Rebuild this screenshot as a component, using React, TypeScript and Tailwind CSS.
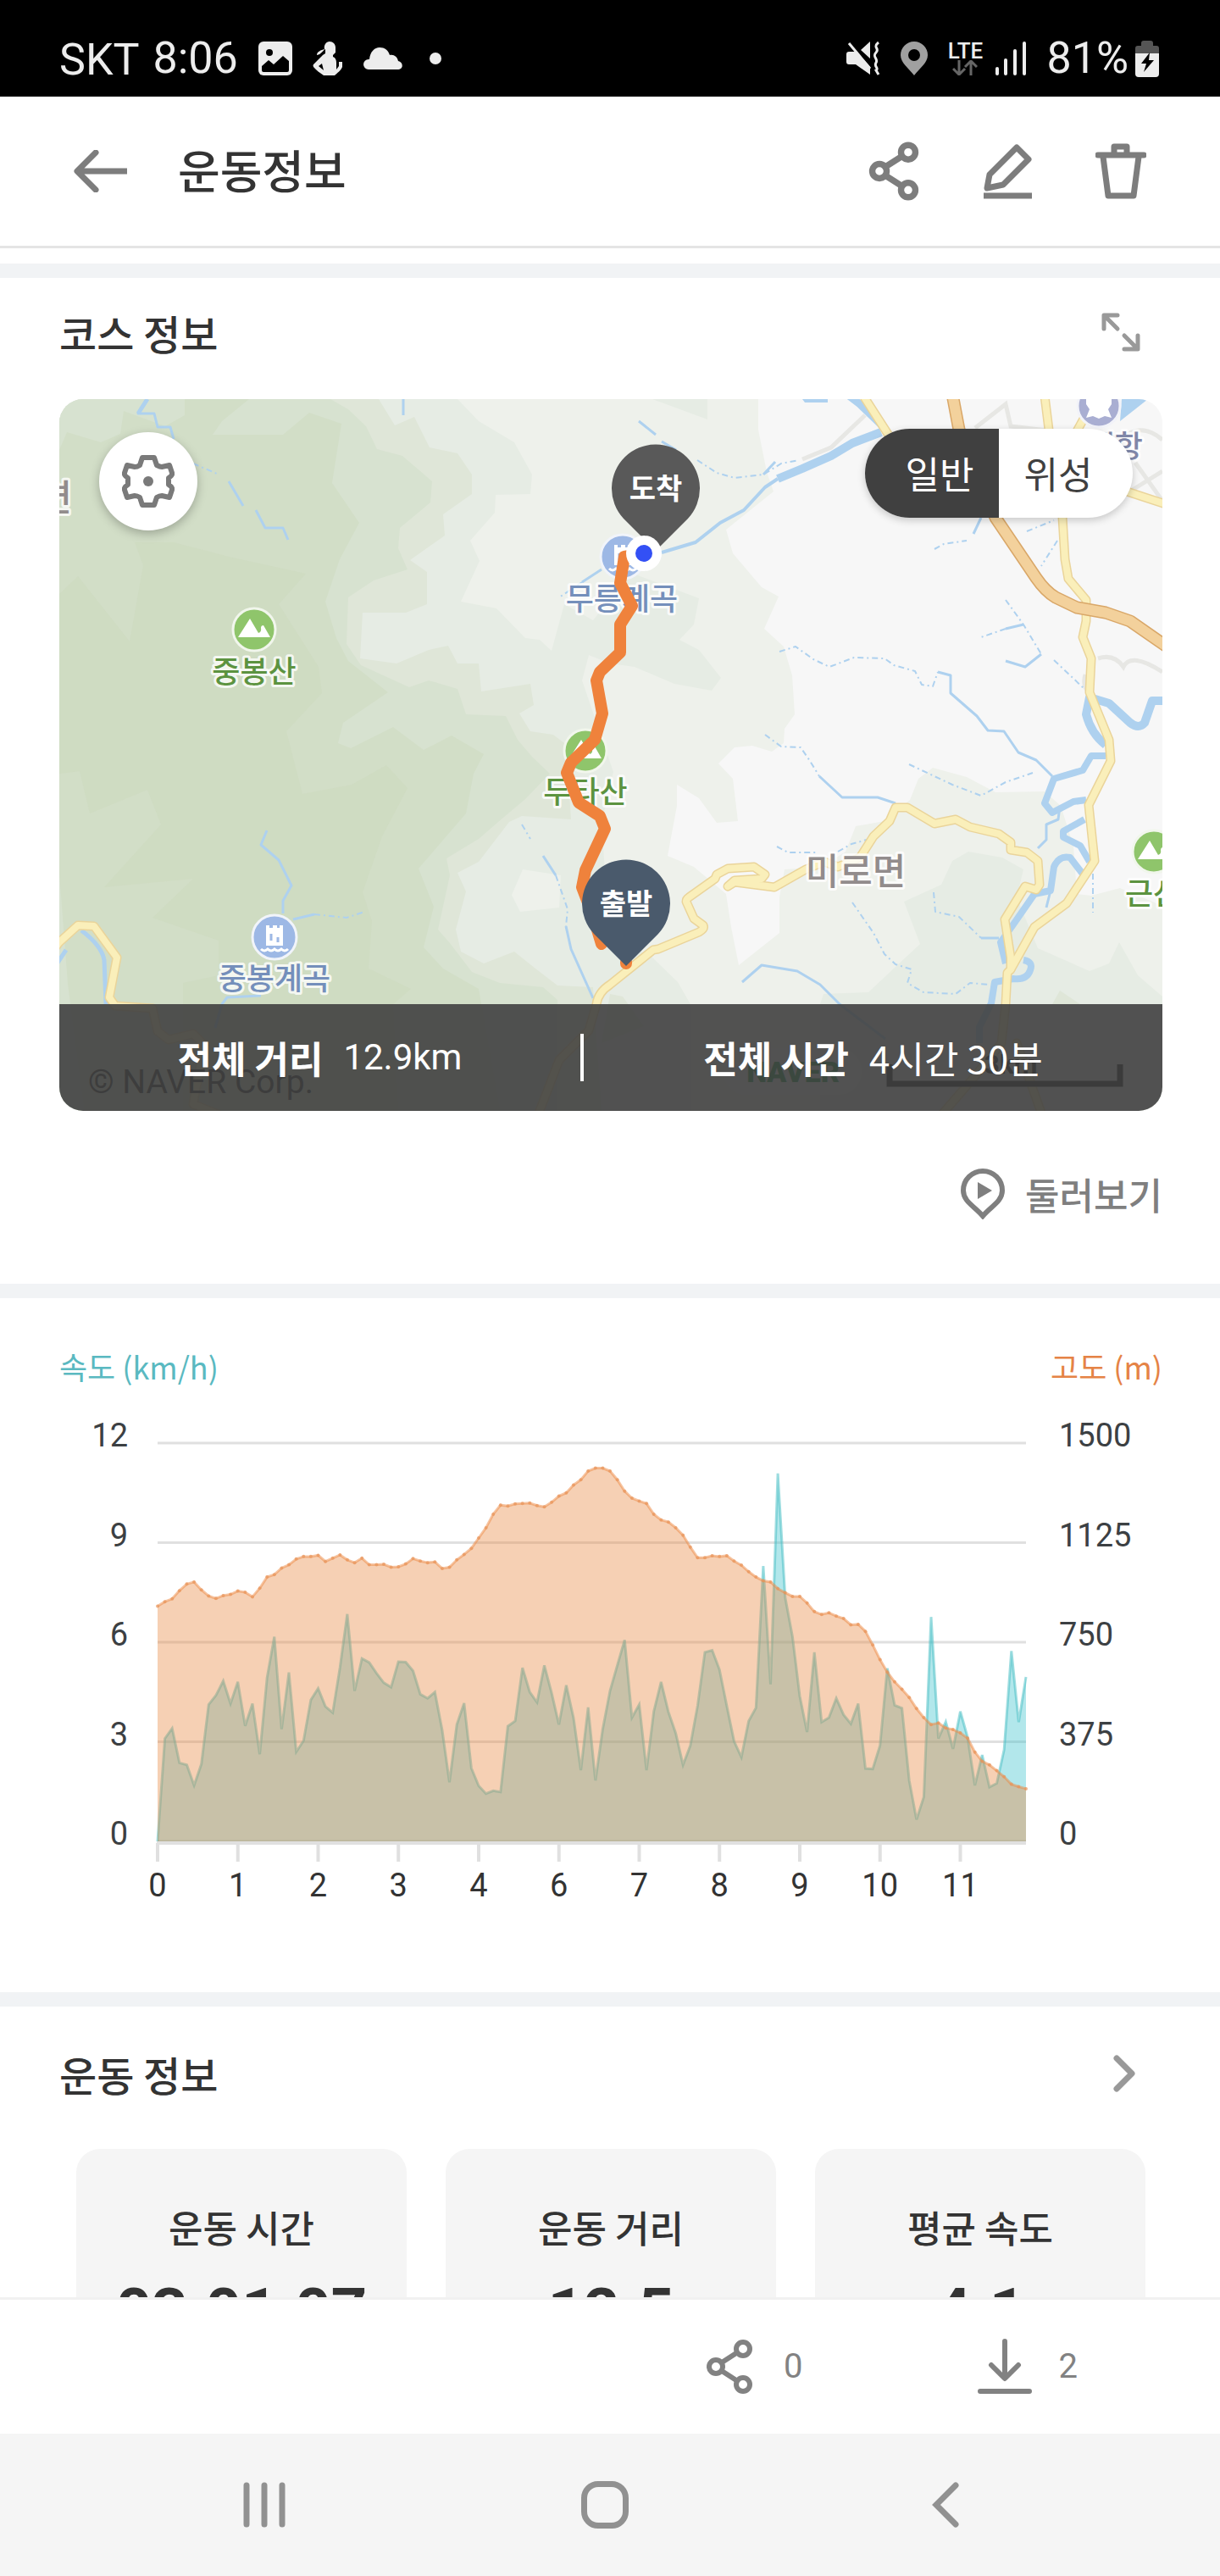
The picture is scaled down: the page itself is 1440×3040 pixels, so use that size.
import { useState, type ReactNode } from "react";
import clsx from "clsx";

// Raw samples, one every 1/11 of an axis step. SAMPLE_MAX is the top of both axes.
const SAMPLE_MAX = 969;

const speedSamples = [
  0, 250, 275, 191, 186, 136, 188, 333, 355, 390, 335, 388, 281, 335, 212, 398, 498, 273, 411, 218,
  245, 344, 372, 328, 313, 423, 553, 366, 445, 435, 409, 386, 375, 437, 436, 415, 358, 348, 363, 271,
  144, 284, 336, 178, 135, 116, 123, 120, 280, 293, 422, 363, 338, 428, 361, 284, 380, 300, 173, 326,
  148, 273, 366, 428, 490, 301, 333, 173, 316, 388, 315, 263, 186, 233, 330, 460, 465, 418, 330, 243,
  205, 293, 325, 670, 382, 895, 593, 498, 353, 266, 460, 290, 301, 348, 308, 286, 335, 177, 176, 233,
  421, 331, 324, 148, 53, 108, 546, 250, 291, 225, 316, 253, 136, 210, 132, 141, 223, 463, 290, 400,
];

const altitudeSamples = [
  572, 583, 590, 610, 626, 631, 612, 597, 591, 598, 601, 609, 606, 595, 616, 643, 649, 665, 673, 687,
  693, 693, 696, 681, 689, 697, 685, 678, 689, 673, 673, 674, 667, 668, 675, 688, 682, 678, 680, 664,
  667, 685, 698, 713, 738, 763, 796, 818, 816, 821, 822, 823, 817, 814, 825, 840, 848, 867, 880, 901,
  908, 908, 901, 880, 852, 835, 828, 822, 796, 782, 777, 763, 745, 716, 690, 690, 695, 693, 695, 682,
  672, 656, 643, 634, 631, 615, 605, 596, 596, 580, 559, 552, 556, 548, 542, 527, 528, 511, 478, 442,
  412, 388, 370, 350, 323, 301, 284, 288, 276, 272, 264, 251, 217, 195, 186, 172, 157, 139, 133, 128,
];

const speedTicks = ["12", "9", "6", "3", "0"];
const altitudeTicks = ["1500", "1125", "750", "375", "0"];
const distanceTicks = ["0", "1", "2", "3", "4", "6", "7", "8", "9", "10", "11"];

const summary = [
  { label: "운동 시간", value: "03:01:07" },
  { label: "운동 거리", value: "12.5" },
  { label: "평균 속도", value: "4.1" },
];

function ShareIcon({ className, width = 7 }: { className: string; width?: number }) {
  return (
    <svg className={className} viewBox="0 0 56 66" fill="none" stroke="currentColor" strokeWidth={width}>
      <path d="M19 28 36 17M19 38l17 11" />
      <circle cx="12" cy="33" r="8" />
      <circle cx="44" cy="12" r="8" />
      <circle cx="44" cy="54" r="8" />
    </svg>
  );
}

function StatusBar() {
  return (
    <div className="flex h-[114px] shrink-0 items-center justify-between bg-black pr-[72px] pb-[6px] pl-[70px] pt-[30px] font-[Roboto,sans-serif] text-[52px] leading-none text-[#ededed]">
      <div className="flex items-center">
        <span className="pt-1">SKT</span>
        <span className="ml-4">8:06</span>
        <svg className="ml-6 h-10 w-10" viewBox="0 0 40 40">
          <rect width="40" height="40" rx="6" fill="currentColor" />
          <circle cx="13" cy="13" r="4" fill="#000" />
          <path d="M4 29 12 22l6 5 11-10 7 6v11q0 2-2 2H6q-2 0-2-2Z" fill="#000" />
        </svg>
        <svg className="ml-6 h-10 w-9" viewBox="0 0 36 40" fill="currentColor">
          <path
            fillRule="evenodd"
            d="M20 0c4 0 7 3 7 7v6l-3 3v2c3 1 4 4 4 7v8l3-4v-5h4v6c-2 5-6 7-9 10H13C9 37 4 34 1 30q-1-2 0-3l11-11 3-2V9c-3 1-4 6-10 7 0-4 5-6 9-7C13 4 16 0 20 0ZM11 26l-4 3 6 5Z"
          />
        </svg>
        <svg className="ml-6 h-[26px] w-[46px]" viewBox="0 0 46 26" fill="currentColor">
          <path d="M6 26a6 6 0 0 1 0-12h1C8 5 13 0 19 0c6 0 10 3 12 9 5-1 9 2 10 7 6 1 7 10-1 10Z" />
        </svg>
        <span className="ml-8 size-[14px] rounded-full bg-[#ededed]" />
      </div>
      <div className="flex items-center">
        <svg className="h-10 w-10" viewBox="0 0 40 40" fill="none" stroke="currentColor">
          <path d="M3 12h8l17 17v10L11 27H3q-3 0-3-3v-9q0-3 3-3ZM17 10 28 0v20Z" fill="currentColor" stroke="none" />
          <path d="M6 1 32 32" stroke="#000" strokeWidth="3" />
          <path d="M3 2 28 32" strokeWidth="3" />
          <path d="M38 1c-8 6 2 7-3 12s3 7 0 12 4 6 0 9l3 5" strokeWidth="3" />
        </svg>
        <svg className="ml-6 h-10 w-8" viewBox="0 0 32 40">
          <path fillRule="evenodd" fill="#a0a0a0" d="M16 0a16 16 0 0 1 16 16c0 9-9 15-16 24C9 31 0 25 0 16A16 16 0 0 1 16 0Zm0 9a7 7 0 1 0 0 14 7 7 0 0 0 0-14Z" />
        </svg>
        <span className="ml-6 flex w-10 flex-col items-center">
          <span className="text-[26px] leading-[22px] font-medium">LTE</span>
          <svg className="h-[18px] w-[30px]" viewBox="0 0 30 18" fill="none" stroke="#666" strokeWidth="3">
            <path d="M8 0v17M1 10l7 7 7-7M22 18V1M15 8l7-7 7 7" />
          </svg>
        </span>
        <svg className="ml-4 h-10 w-9" viewBox="0 0 36 40" stroke="currentColor" strokeWidth="4" strokeLinecap="round">
          <path d="M2 32v6M12 22v16M23 11v27M34 2v36" />
        </svg>
        <span className="ml-6">81%</span>
        <svg className="ml-2 h-[43px] w-7" viewBox="0 0 28 43">
          <path d="M0 16V9q0-3 3-3h4V3q0-3 3-3h8q3 0 3 3v3h4q3 0 3 3v7Z" fill="#555" />
          <path d="M0 15h28v24q0 4-4 4H4q-4 0-4-4Z" fill="currentColor" />
          <path d="M17 14 7 27h6L10 37l12-14h-6Z" fill="#000" />
        </svg>
      </div>
    </div>
  );
}

function Header() {
  return (
    <header className="flex h-[179px] shrink-0 items-center border-b-3 border-[#e4e4e4] bg-white pr-[87px] pl-[86px] text-[#7d7d7d]">
      <button aria-label="뒤로">
        <svg className="h-[50px] w-16" viewBox="0 0 64 50" fill="none" stroke="currentColor" strokeWidth="7" strokeLinejoin="round">
          <path d="M63 25H6M27 3 5 25l22 22" strokeLinecap="round" />
        </svg>
      </button>
      <h1 className="ml-[60px] flex-1 pb-1 text-[54px] leading-none font-medium text-[#333]">운동정보</h1>
      <div className="flex items-center">
        <button aria-label="공유">
          <ShareIcon className="h-[70px] w-[60px]" />
        </button>
        <button aria-label="수정" className="ml-[76px]">
          <svg className="h-[66px] w-[58px]" viewBox="0 0 58 66" fill="none" stroke="currentColor" strokeWidth="7">
            <path d="M39 5 53 19 23 49 4 53 7 37Z" strokeLinejoin="round" />
            <path d="M0 62h57" />
          </svg>
        </button>
        <button aria-label="삭제" className="ml-[74px]">
          <svg className="h-[66px] w-[60px]" viewBox="0 0 60 66" fill="none" stroke="currentColor" strokeWidth="7" strokeLinejoin="round">
            <path d="M3 14h54" strokeLinecap="round" />
            <path d="M22 12V4h15v8M9 16l6 46h30l6-46" />
          </svg>
        </button>
      </div>
    </header>
  );
}

function MapLabel({ x, y, color, size = 36, anchor = "middle", children }: {
  x: number;
  y: number;
  color: string;
  size?: number;
  anchor?: "start" | "middle" | "end";
  children: ReactNode;
}) {
  return (
    <text x={x} y={y} fontSize={size} textAnchor={anchor} fill={color} stroke="#fff" strokeOpacity="0.8" strokeWidth="6" strokeLinejoin="round" paintOrder="stroke" className="font-medium">
      {children}
    </text>
  );
}

function Mountain({ x, y }: { x: number; y: number }) {
  return (
    <g transform={`translate(${x} ${y})`}>
      <circle r="25" fill="#8fc56b" stroke="#f1f6ec" strokeWidth="3" />
      <path d="M-19 9-5-13 5 4q4-1 3-6 0-3 3-3l8 14Z" fill="#fff" />
    </g>
  );
}

function Valley({ x, y }: { x: number; y: number }) {
  return (
    <g transform={`translate(${x} ${y})`}>
      <circle r="26" fill="#9db8e5" stroke="#f1f4fa" strokeWidth="3" />
      <path d="M-10-14h4v3h4v-3h5v3h3v-3h4v24h-20Z" fill="#fff" />
      <path d="M-4-4v8M4 0v6" stroke="#9db8e5" strokeWidth="3" />
      <path d="M-16 14q4 4 8 0 4 4 8 0 4 4 8 0 4 4 8 0" fill="none" stroke="#fff" strokeWidth="3" />
    </g>
  );
}

function Pin({ x, y, fill, children }: { x: number; y: number; fill: string; children: ReactNode }) {
  return (
    <g transform={`translate(${x} ${y})`}>
      <path d="M0 74-38 36A52 52 0 1 1 38 36Z" fill={fill} />
      <text y="13" fontSize="34" textAnchor="middle" fill="#fff" className="font-bold">
        {children}
      </text>
    </g>
  );
}

const highway = "M1054-6 1062 36 1105 140 1153 211Q1164 227 1176 234L1201 246 1235 252 1264 262 1310 294";

const yellowRoads = [
  "M-4 646 0 641 22 621 41 622 68 659 59 706 66 716 110 719 116 746 129 756 158 749 171 762 158 832 190 845",
  "M565 845 590 780 625 745 634 714Q636 700 650 691L701 650 707 649 755 629Q762 625 760 621L749 613 740 593Q740 590 743 588L774 566 776 561 789 554 820 552 833 561 829 566 797 568 789 575 797 570 844 576 881 555 903 546 919 552 945 541 961 516 980 498 987 482 1001 482 1033 501 1058 496 1075 505 1109 513 1123 523 1123 532 1142 535 1155 545 1157 573 1153 579 1140 575 1116 614 1123 659 1123 673 1119 677 1117 714 1112 760 1080 800 1041 845",
  "M1163-4 1168 36 1184 139 1187 189 1191 212 1212 237V262L1208 281 1218 306 1216 346 1239 402 1241 427 1215 479 1222 545 1189 595 1151 623 1123 673",
  "M949-4 987 55M1260 109 1306 124M1212 18 1197 45M1130 760 1160 845",
];

const greyRoads =
  "M877 71 911 57 951 19M1081 34 1117 6 1123 32 1175 38M1240 62Q1270 20 1302 48M1262 110 1302 85M1270 75 1302 120M1226 306Q1245 300 1256 316 1265 298 1302 322M1211 325Q1207 340 1216 346";

const streams = [
  "M103 0 93 17H112L116 33H131L135 47M200 97 217 126M232 131 243 152H264L270 166M406-2V19",
  "M245 509 238 526 259 544 274 574 264 592V607M276 614 301 608M238 704 198 706 192 714 184 742",
  "M640 201 617 216M571 539 586 562M598 622 604 649 630 707",
  "M845 74 831 89M1037 322 1052 326V347L1083 374 1096 391 1115 392 1132 417 1153 426 1172 445",
  "M684 26 704 42M711 50 728 60M897 445 924 470H966L987 477M806 688 829 668 871 675 898 691 921 714 975 755M1181 480 1179 496 1165 502V520L1155 530",
  "M1170 580 1165 600M1088 636H1109M1138 266 1117 271M1159 301 1140 316 1117 309M1079 159 1088 140",
];

const dashedStreams = [
  "M158 76 186 88M301 608 339 612 360 605M617 216 590 234M546 502 556 519M586 562 600 602 598 622",
  "M753 72 776 87 797 93 831 89 852 76 873 72M850 298 869 292 890 307 909 316 938 305 974 306 985 314 1010 321 1018 337 1031 339 1037 322",
  "M833 396 852 410 875 411 886 427 897 445M1003 431 1054 455 1088 468 1117 452 1149 441",
  "M936 594 961 630 974 655 987 667 1006 673 1001 689 1020 700 1058 702 1075 689 1098 691M1032 582 1034 605 1062 611 1088 636",
  "M847 528 860 535H894M919 534 935 525 953 520M1117 237 1138 266 1159 301M1117 271 1088 281M1174 308 1210 342",
  "M1033 177 1044 171 1071 167M1142 156 1174 143M1178 167 1159 197M1220 560V606",
];

function CourseMap() {
  return (
    <svg className="block h-full w-full" viewBox="0 0 1302 840" preserveAspectRatio="xMidYMid slice" role="img" aria-label="코스 지도">
      <rect width="1302" height="840" fill="#f7f7f7" />
      {/* terrain, lightest to darkest */}
      <path fill="#eef1eb" d="M0 0H825V36L835 86 843 109 787 154 795 182 829 222 849 233 832 271 855 292 865 326 868 372 856 389 855 406 841 416 818 409 797 411 778 430 795 448 801 498 776 500 755 471 729 455V480L718 539 749 552 787 584 793 623 802 668 850 630V588L856 555 900 552 928 534 940 504 974 498 1004 473 1014 448 1031 435 1071 446 1105 464 1163 463 1182 480 1197 527 1201 584 1218 586 1252 577 1302 598V840H0Z" />
      <path fill="#e6ece4" d="M0 0H470L495 26 537 51 558 89 556 112 515 113 514 134 485 167 496 191 474 239 516 247 550 282 567 284 581 297 596 242 630 261 675 205 755 235 749 266 732 284 755 296 781 329 770 344 726 336 679 316 650 312 625 302 617 332 654 440 640 500 650 640 696 655 730 688 746 716V840H0ZM898 714 902 702 955 700 987 670 1016 643 997 593 1041 573 1054 545 1073 534 1113 541 1138 555 1130 588 1155 648 1216 675 1239 666 1251 641 1273 680 1302 705V840H898ZM700 0H765V24Z" />
      <path fill="#dfe6d8" d="M0 0H377L396 31 419 21 437 57 470 64 487 89V112L453 136 455 161 414 190 434 204V242L409 252H358L355 306 398 312 436 296 459 291 470 312H495L498 345 556 336 560 361 543 371 556 392 583 396 600 409 602 466 604 496 546 492 531 499 495 546 470 559 480 581 468 626 474 652 501 666 537 652 562 672 588 692 630 694 640 840H0ZM650 702 665 705 690 740 640 760ZM1181 698 1205 714H1172Z" />
      <path fill="#eef1eb" d="M547 555 592 562 590 600 544 605 534 585Z" />
      <path fill="#d7e2d0" d="M0 0H320L341 12 362 32 375 59 405 67 440 97 438 122 402 152 400 176 411 201 371 214 341 234 339 289 356 314 413 340 436 332 470 342 480 372 527 374 541 402 558 422 579 442 550 472 518 499 495 519 457 542 461 562 447 626 461 642 487 676 520 689 571 694 588 709V840H0Z" />
      <path fill="#d2dec7" d="M0 60 9 39 49 51 72 41 76 14 125 32 148 19V0H224L192 26 181 42H264L295 16 333 29 322 99 354 146 331 189 314 239 327 282 341 309 388 346 335 382 329 406 344 412 394 387 430 414 463 397 501 419 489 442 480 489 424 554 442 599 430 647 453 672 495 696 520 840H30L10 690 0 560Z" />
      <path fill="#cedbc1" fillOpacity="0.8" d="M0 230 22 209 83 286 99 196 89 169 135 169 200 186 291 206 259 242 306 316 310 347 268 392 287 466 345 455 386 432 411 459 381 516 358 582 369 616 365 672 415 696 394 714 400 840H146V689L188 680V639L110 612 158 566 53 576 120 502 104 461 36 489 24 439 0 442Z" />

      <g fill="none" stroke="#e7e7e4" strokeWidth="5">
        <path d={greyRoads} />
      </g>

      <g fill="none" stroke="#aed1ef" strokeLinejoin="round">
        {streams.map((d) => (
          <path key={d} d={d} strokeWidth="3" />
        ))}
        {dashedStreams.map((d) => (
          <path key={d} d={d} strokeWidth="2" strokeDasharray="7 4 2 4" />
        ))}
        <path d="M711 181 751 169 780 146 808 131 833 104 848 94" strokeWidth="4" />
        <path d="M848 94 877 82 911 67 936 52 970 39" strokeWidth="10" />
        <path d="M975 35 945 6 932-4" strokeWidth="9" />
        <path d="M93 17 104 0M26 627Q50 645 53 662L55 714M-2 665 8 650" strokeWidth="5" />
        <path d="M1302 356H1290L1281 382Q1274 390 1264 382L1239 359 1216 352 1212 372Q1218 395 1235 408" strokeWidth="10" />
        <path d="M1235 421H1218L1208 438 1174 448 1163 477 1172 488 1197 475 1212 473" strokeWidth="8" />
        <path d="M1210 496 1185 510V517L1205 527 1216 546M1210 563 1193 541Q1180 538 1174 552L1170 580 1151 584 1126 620 1111 641 1117 666" strokeWidth="8" />
        <path d="M1138 662Q1150 664 1146 674 1142 686 1126 684L1104 688 1100 713 1086 741V760" strokeWidth="8" />
      </g>
      <path fill="#aed1ef" d="M1252 26 1254 0H1285ZM877 0H907V4H880Z" />

      <g fill="none" strokeLinejoin="round" strokeLinecap="round">
        {yellowRoads.map((d) => (
          <path key={d} d={d} stroke="#ead49a" strokeWidth="11" />
        ))}
        {yellowRoads.map((d) => (
          <path key={d} d={d} stroke="#faefba" strokeWidth="8" />
        ))}
        <path d={highway} stroke="#d9a768" strokeWidth="15" />
        <path d={highway} stroke="#f3d19c" strokeWidth="12" />
      </g>

      <Mountain x={230} y={272} />
      <MapLabel x={230} y={335} color="#5c9340">중봉산</MapLabel>
      <Valley x={254} y={635} />
      <MapLabel x={254} y={697} color="#748fbb">중봉계곡</MapLabel>
      <Valley x={665} y={186} />
      <MapLabel x={664} y={249} color="#748fbb">무릉계곡</MapLabel>
      <Mountain x={621} y={415} />
      <MapLabel x={621} y={477} color="#5c9340">두타산</MapLabel>
      <Mountain x={1292} y={534} />
      <MapLabel x={1258} y={597} color="#5c9340" anchor="start">근산</MapLabel>
      <MapLabel x={940} y={573} color="#928c8c" size={43}>미로면</MapLabel>
      <MapLabel x={15} y={132} color="#928c8c" size={43} anchor="end">면</MapLabel>
      <MapLabel x={1279} y={69} color="#8087a8" anchor="end">동해항</MapLabel>
      <circle cx="1227" cy="8" r="25" fill="#a9aed2" stroke="#f2f3f9" strokeWidth="3" />
      <path d="M1212-2h8v-6h14v6h8v8l-4 6 4 10-8-2-7 3-7-3-8 2 4-10-4-6Z" fill="#fff" />

      <path d="M703 178 690 182 667 186 662 217 676 244 662 266V299L638 322 634 332 641 371 632 402 604 429 599 441 613 476 638 492 644 507 621 556 617 576 630 610 640 643M669 666v-2" fill="none" stroke="#ef823c" strokeWidth="14" strokeLinejoin="round" strokeLinecap="round" />
      <Pin x={669} y={595} fill="#4a5a6c">출발</Pin>
      <Pin x={704} y={105} fill="#595959">도착</Pin>
      <circle cx="690" cy="182" r="21" fill="#fff" />
      <circle cx="690" cy="182" r="10" fill="#3350f5" />

      <text x="34" y="819" fontSize="39" fill="#222" className="font-[Roboto,sans-serif]">© NAVER Corp.</text>
      <rect x="784" y="766" width="163" height="55" rx="27" fill="#fff" fillOpacity="0.4" />
      <text x="866" y="806" fontSize="34" textAnchor="middle" fill="#0a8a3a" className="font-[Roboto,sans-serif] font-black">NAVER</text>
      <text x="1123" y="796" fontSize="32" textAnchor="middle" fill="#111" className="font-[Roboto,sans-serif] font-bold">3km</text>
      <path d="M980 785V808H1252V785" fill="none" stroke="#111" strokeWidth="7" />
    </svg>
  );
}

function CourseSection() {
  const [mapType, setMapType] = useState<"normal" | "satellite">("normal");

  return (
    <section className="border-t-[17px] border-[#f1f3f5] pr-[68px] pb-[74px] pl-[70px]">
      <div className="flex items-center justify-between pt-8 pr-[26px] pb-[47px]">
        <h2 className="text-[48px] leading-[64px] font-medium text-[#333]">코스 정보</h2>
        <button aria-label="지도 확대" className="text-[#999]">
          <svg className="size-[46px]" viewBox="0 0 46 46" fill="none" stroke="currentColor" strokeWidth="5" strokeLinejoin="round" strokeLinecap="round">
            <path d="M3 19V3h16M4 4l15 15M27 43h16V27M42 42 27 27" />
          </svg>
        </button>
      </div>

      <div className="relative aspect-[1302/840] overflow-hidden rounded-[28px]">
        <CourseMap />
        <button aria-label="지도 설정" className="absolute top-[39px] left-[47px] flex size-[116px] items-center justify-center rounded-full bg-white text-[#7a7a7a] shadow-[0_4px_12px_rgba(0,0,0,0.25)]">
          <svg className="size-[62px]" viewBox="0 0 62 62" fill="none" stroke="currentColor" strokeWidth="6" strokeLinejoin="round">
            <path d="M24 3h14l3 9q4 2 6 2l9-2 3 9q1 3-4 6v8q5 3 4 6l-3 9-9-2q-3 0-6 2l-3 9H24l-3-9q-3-2-6-2l-9 2-3-9q-1-3 4-6v-8q-5-3-4-6l3-9 9 2q3 0 6-2Z" />
            <circle cx="31" cy="31" r="6" fill="currentColor" stroke="none" />
          </svg>
        </button>
        <div className="absolute top-[35px] right-[35px] flex overflow-hidden rounded-full bg-white text-[44px] leading-[105px] text-[#404040] shadow-[0_3px_10px_rgba(0,0,0,0.2)]">
          <button
            aria-pressed={mapType === "normal"}
            onClick={() => setMapType("normal")}
            className={clsx("w-[158px] pl-[18px]", mapType === "normal" && "bg-[#404040] text-white")}
          >
            일반
          </button>
          <button
            aria-pressed={mapType === "satellite"}
            onClick={() => setMapType("satellite")}
            className={clsx("w-[158px] pr-[18px]", mapType === "satellite" && "bg-[#404040] text-white")}
          >
            위성
          </button>
        </div>
        <dl className="absolute inset-x-0 bottom-0 flex h-[126px] items-center bg-[#404040]/90 text-[44px] leading-none text-white">
          <div className="flex flex-9 items-center justify-center gap-6">
            <dt className="font-bold">전체 거리</dt>
            <dd className="font-[Roboto,sans-serif] text-[42px]">12.9km</dd>
          </div>
          <div className="h-14 w-1 bg-white" />
          <div className="flex flex-10 items-center justify-center gap-6">
            <dt className="font-bold">전체 시간</dt>
            <dd>4시간 30분</dd>
          </div>
        </dl>
      </div>

      <div className="flex justify-end pt-[66px]">
        <button className="flex items-center gap-6 text-[44px] leading-[64px] font-medium text-[#7f7f7f]">
          <svg className="h-[60px] w-[52px]" viewBox="0 0 52 60">
            <path d="M26 56C17 45 3 39 3 26a23 23 0 0 1 46 0c0 13-14 19-23 30Z" fill="none" stroke="currentColor" strokeWidth="6" />
            <path d="M20 16v20l17-10Z" fill="currentColor" />
          </svg>
          둘러보기
        </button>
      </div>
    </section>
  );
}

const PLOT = { left: 116, right: 1141, top: 33, bottom: 503 };
const SAMPLES_PER_TICK = 11;

function toPoints(samples: number[]) {
  const dx = (PLOT.right - PLOT.left) / (samples.length - 1);
  const dy = (PLOT.bottom - PLOT.top) / SAMPLE_MAX;
  return samples.map((v, i) => [PLOT.left + i * dx, PLOT.bottom - v * dy]);
}

function toLine(points: number[][]) {
  return "M" + points.map((p) => `${p[0].toFixed(1)} ${p[1].toFixed(1)}`).join("L");
}

function Chart() {
  const speed = toPoints(speedSamples);
  const altitude = toPoints(altitudeSamples);
  const close = `V${PLOT.bottom}H${PLOT.left}Z`;
  const rowGap = (PLOT.bottom - PLOT.top) / (speedTicks.length - 1);
  const tickGap = ((PLOT.right - PLOT.left) / (speedSamples.length - 1)) * SAMPLES_PER_TICK;

  return (
    <svg className="mt-9 block w-full font-[Roboto,sans-serif]" viewBox="0 0 1302 580" role="img" aria-label="속도와 고도 그래프">
      {speedTicks.map((tick, i) => (
        <g key={tick} fontSize="38" fill="#3c4043">
          <path d={`M${PLOT.left} ${PLOT.top + i * rowGap}H${PLOT.right}`} stroke="#e0e0e0" strokeWidth="3" />
          <text x="81" y={PLOT.top + i * rowGap + 4} textAnchor="end">{tick}</text>
          <text x="1180" y={PLOT.top + i * rowGap + 4}>{altitudeTicks[i]}</text>
        </g>
      ))}
      <path d={toLine(speed) + close} fill="#3fc4cc" fillOpacity="0.4" />
      <path d={toLine(speed)} fill="none" stroke="#3fbcc2" strokeOpacity="0.5" strokeWidth="3" />
      <path d={toLine(altitude) + close} fill="#e88943" fillOpacity="0.4" />
      <path d={toLine(altitude)} fill="none" stroke="#ed8a43" strokeOpacity="0.5" strokeWidth="3" />
      {altitude.map(([x, y]) => (
        <circle key={x} cx={x} cy={y} r="2" fill="#e8945a" fillOpacity="0.7" />
      ))}
      <path d={`M${PLOT.left - 1} ${PLOT.bottom + 2}H${PLOT.right}`} stroke="#e0e0e0" strokeWidth="4" />
      {distanceTicks.map((tick, i) => (
        <g key={tick}>
          <path d={`M${PLOT.left + i * tickGap} ${PLOT.bottom + 2}v22`} stroke="#e0e0e0" strokeWidth="4" />
          <text x={PLOT.left + i * tickGap} y="568" fontSize="38" textAnchor="middle" fill="#333">
            {tick}
          </text>
        </g>
      ))}
    </svg>
  );
}

function ChartSection() {
  return (
    <section className="border-t-[17px] border-[#f1f3f5] pt-[58px] pr-[68px] pb-[101px] pl-[70px]">
      <div className="flex justify-between text-[36px] leading-[44px]">
        <span className="text-[#5ab9c1]">속도 (km/h)</span>
        <span className="text-[#e58346]">고도 (m)</span>
      </div>
      <Chart />
    </section>
  );
}

function SummarySection() {
  return (
    <section className="border-t-[17px] border-[#f1f3f5] text-[#333]">
      <div className="flex items-center justify-between pt-[47px] pr-[99px] pb-[57px] pl-[70px]">
        <h2 className="text-[48px] leading-[64px] font-medium">운동 정보</h2>
        <button aria-label="운동 정보 더보기" className="text-[#999]">
          <svg className="h-11 w-[28px]" viewBox="0 0 28 44" fill="none" stroke="currentColor" strokeWidth="7" strokeLinecap="round" strokeLinejoin="round">
            <path d="m5 4 18 18L5 40" />
          </svg>
        </button>
      </div>
      <dl className="grid grid-cols-3 gap-[46px] pr-[88px] pl-[90px]">
        {summary.map((item) => (
          <div key={item.label} className="rounded-[28px] bg-[#f5f5f5] pt-[60px] pb-16 text-center">
            <dt className="text-[44px] leading-[64px] font-medium">{item.label}</dt>
            <dd className="mt-6 font-[Roboto,sans-serif] text-[74px] leading-[88px] font-bold">{item.value}</dd>
          </div>
        ))}
      </dl>
    </section>
  );
}

function ActionBar() {
  return (
    <footer className="flex h-[161px] shrink-0 items-center justify-end border-t-3 border-[#f1f1f1] bg-white pr-[168px] font-[Roboto,sans-serif] text-[40px] leading-none text-[#828282]">
      <button aria-label="공유 0" className="flex items-center gap-9">
        <ShareIcon className="h-[66px] w-14" width={6} />
        0
      </button>
      <button aria-label="다운로드 2" className="ml-[206px] flex items-center gap-8">
        <svg className="h-[66px] w-16" viewBox="0 0 64 66" fill="none" stroke="currentColor" strokeWidth="6" strokeLinecap="round" strokeLinejoin="round">
          <path d="M32 3v43M16 31l16 16 16-16M3 62h58" />
        </svg>
        2
      </button>
    </footer>
  );
}

function NavBar() {
  return (
    <nav className="flex h-[168px] shrink-0 items-center justify-center bg-[#f5f5f5] pr-3 text-[#919191]">
      <button aria-label="최근 앱" className="flex w-[402px] justify-center">
        <svg className="h-[54px] w-[50px]" viewBox="0 0 50 54" stroke="currentColor" strokeWidth="7" strokeLinecap="round">
          <path d="M4 4v46M25 4v46M46 4v46" />
        </svg>
      </button>
      <button aria-label="홈" className="flex w-[402px] justify-center">
        <span className="h-14 w-14 rounded-[20px] border-[7px] border-current" />
      </button>
      <button aria-label="이전" className="flex w-[402px] justify-center">
        <svg className="h-[54px] w-8" viewBox="0 0 32 54" fill="none" stroke="currentColor" strokeWidth="7" strokeLinecap="round">
          <path d="M28 4 5 27l23 23" />
        </svg>
      </button>
    </nav>
  );
}

export default function App() {
  return (
    <div className="flex h-screen flex-col bg-white font-['Noto_Sans_CJK_KR',sans-serif]">
      <StatusBar />
      <Header />
      <main className="min-h-0 flex-1 overflow-hidden pt-[18px]">
        <CourseSection />
        <ChartSection />
        <SummarySection />
      </main>
      <ActionBar />
      <NavBar />
    </div>
  );
}
